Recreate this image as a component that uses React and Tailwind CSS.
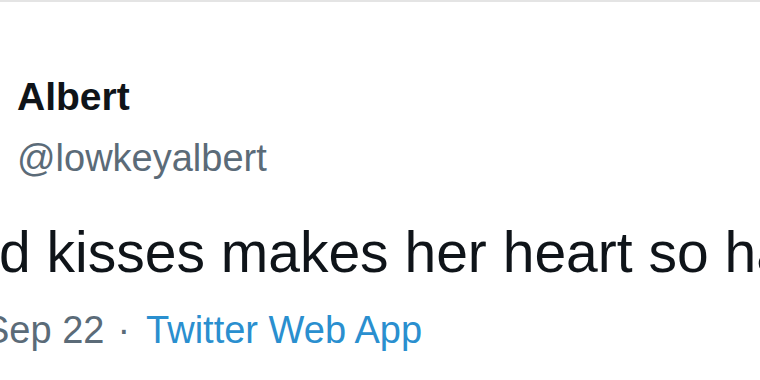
const Tweet = () => {
  return (
    <div className="w-[760px] h-[380px] overflow-hidden bg-white border-t-2 border-[#e4e4e4] font-['Liberation_Sans',Arial,sans-serif]">
      <div className="pl-[17px] pt-[75px]">
        <div className="text-[39px] leading-none font-bold text-[#0f1419]">
          Albert
        </div>
        <div className="mt-[23px] text-[38px] leading-none text-[#5b6b78]">
          @lowkeyalbert
        </div>
      </div>

      {/* tweet body, cropped at both sides */}
      <div className="mt-[47px] ml-[-1px] whitespace-nowrap text-[57px] leading-none text-[#0f1419]">
        d kisses makes her heart so happy
      </div>

      <div className="mt-[30px] ml-[-16px] flex items-baseline whitespace-nowrap text-[38px] leading-none">
        <span className="text-[#5b6b78]">Sep 22</span>
        <span className="ml-[13px] text-[#5b6b78]">·</span>
        <span className="ml-[16px] text-[#2a8fcf]">Twitter Web App</span>
      </div>
    </div>
  );
};

export default function App() {
  return <Tweet />;
}
